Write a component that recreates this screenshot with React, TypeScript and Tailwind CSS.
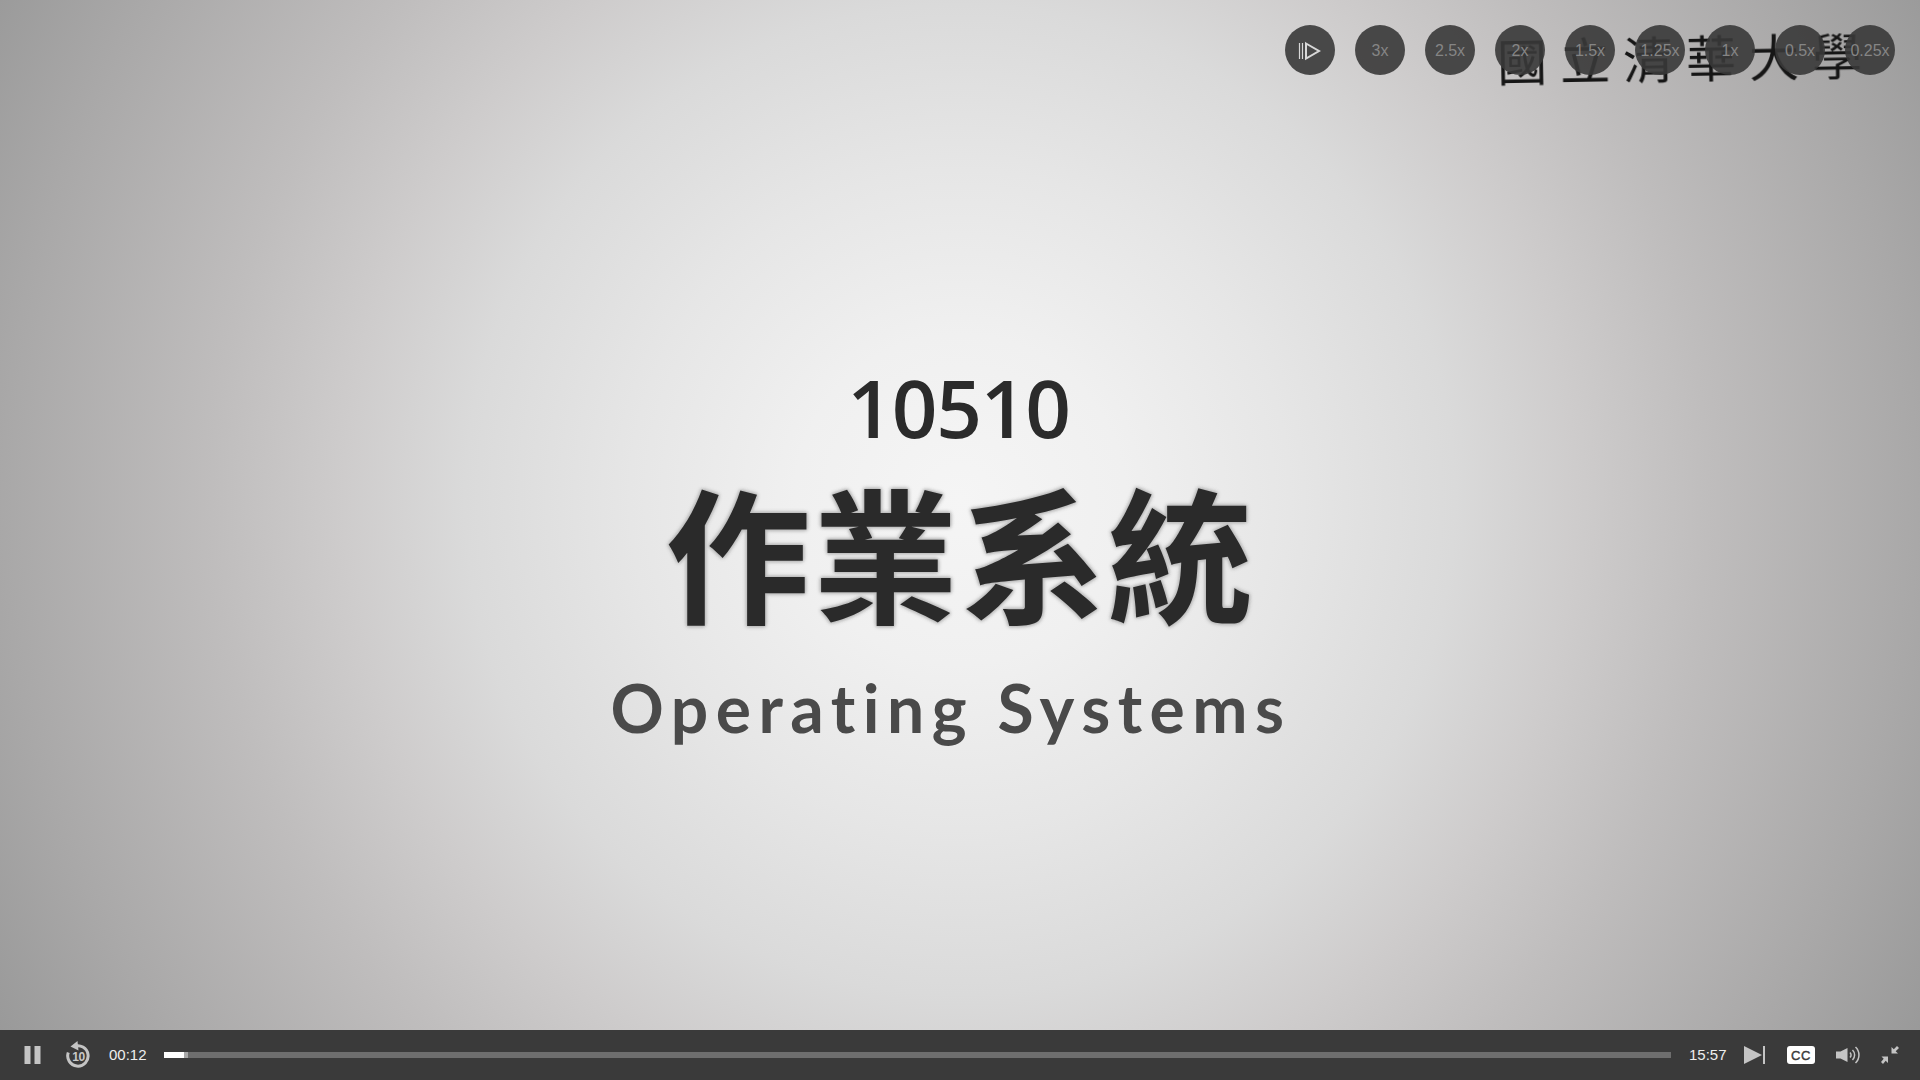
const speeds = ["3x", "2.5x", "2x", "1.5x", "1.25x", "1x", "0.5x", "0.25x"];

function SpeedCircle({ children }: { children: React.ReactNode }) {
  return (
    <div className="flex h-[50px] w-[50px] shrink-0 items-center justify-center rounded-full bg-[#383838]/90 pt-[1px] font-['Liberation_Sans',sans-serif] text-[16px] whitespace-nowrap text-[#858585]">
      {children}
    </div>
  );
}

export default function App() {
  return (
    <div className="flex h-[1080px] w-[1920px] flex-col overflow-hidden font-['Liberation_Sans',sans-serif]">
      <div className="relative flex h-[1030px] flex-col items-center bg-[radial-gradient(circle_1100px_at_50%_48.5%,#f5f5f5_0%,#f0f0f0_15%,#e6e6e6_30%,#dadada_45%,#cecccc_56%,#bfbdbd_68%,#a9a8a8_87%,#999999_100%)]">
        <div className="mt-[357px] ml-[-3px] h-[100px] font-['Open_Sans',sans-serif] text-[80px] leading-[100px] font-semibold tracking-[-1.2px] text-[#2b2b2b]">
          10510
        </div>
        <div className="mt-[8px] ml-[1px] h-[170px] font-['Noto_Sans_CJK_TC',sans-serif] text-[145px] leading-[170px] font-bold tracking-[2.5px] text-[#2a2a2a] [text-shadow:0_0_3px_#bcbcbc,0_0_3px_#bcbcbc,0_0_4px_#bcbcbc,0_0_5px_#bcbcbc]">
          作業系統
        </div>
        <div className="mt-[28px] ml-[-18px] h-[90px] font-['Lato',sans-serif] text-[66px] leading-[90px] font-bold tracking-[7.5px] whitespace-nowrap text-[#4a4a4a]">
          Operating Systems
        </div>

        <div className="absolute top-[24px] left-[1497px] -rotate-1 font-['Noto_Sans_CJK_TC',sans-serif] text-[50px] leading-[64px] font-normal tracking-[13px] whitespace-nowrap text-[#161616] blur-[0.6px]">
          國立清華大學
        </div>

        <div className="absolute top-[25px] right-[25px] flex gap-[20px]">
          <SpeedCircle>
            <svg width="24" height="22" viewBox="0 0 24 22" fill="none" stroke="#d8d8d8">
              <path d="M1.5 3v16M4.5 3v16" strokeWidth="1.2" />
              <path d="M8 3.5 21 11 8 18.5Z" strokeWidth="2" strokeLinejoin="miter" />
            </svg>
          </SpeedCircle>
          {speeds.map((s) => (
            <SpeedCircle key={s}>{s}</SpeedCircle>
          ))}
        </div>
      </div>

      <div className="flex h-[50px] items-center bg-[#3a3a3a] pl-[24px] text-[15px] text-[#eeeeee]">
        <svg width="17" height="18" viewBox="0 0 17 18" className="shrink-0" fill="#c4c4c4">
          <rect x="0.5" y="0" width="6" height="18" />
          <rect x="10.5" y="0" width="6" height="18" />
        </svg>
        <div className="relative ml-[25px] h-[28px] w-[25px] shrink-0">
          <svg width="25" height="28" viewBox="0 0 25 28" fill="none">
            <path d="M8 5.5a10.2 10.2 0 1 1-5.7 6" stroke="#c4c4c4" strokeWidth="3" />
            <path d="M11.5 0 4.5 5.5 12.5 9.5Z" fill="#c4c4c4" />
          </svg>
          <span className="absolute top-[9px] left-0 w-[25px] text-center text-[12px] leading-[14px] font-bold tracking-[-0.5px] text-[#c8c8c8]">
            10
          </span>
        </div>
        <span className="ml-[18px] w-[38px] shrink-0 whitespace-nowrap">00:12</span>
        <div className="ml-[17px] flex h-[6px] w-[1507px] shrink-0 bg-[#6e6e6e]">
          <div className="h-full w-[20px] bg-white" />
          <div className="h-full w-[4px] bg-[#a8a8a8]" />
        </div>
        <span className="ml-[18px] w-[38px] shrink-0 whitespace-nowrap">15:57</span>
        <svg width="21" height="18" viewBox="0 0 21 18" className="ml-[17px] shrink-0" fill="#c4c4c4">
          <path d="M0 0 18 9 0 18Z" />
          <rect x="19" y="0" width="2" height="18" />
        </svg>
        <div className="ml-[22px] flex h-[18px] w-[28px] shrink-0 items-center justify-center rounded-[3px] bg-white text-[13px] leading-none font-medium tracking-[0.5px] text-[#3a3a3a] [-webkit-text-stroke:0.4px_#3a3a3a]">
          CC
        </div>
        <svg width="24" height="20" viewBox="0 0 24 20" className="ml-[21px] shrink-0" fill="none">
          <path d="M0 6.5h4.5l7-3.5v14l-7-3.5H0Z" fill="#c4c4c4" />
          <path d="M14 7.5a3.5 3.5 0 0 1 0 5M16.5 5a7 7 0 0 1 0 10M19.5 2a11 11 0 0 1 0 16" stroke="#c4c4c4" strokeWidth="1.5" />
        </svg>
        <svg width="18" height="18" viewBox="0 0 18 18" className="ml-[21px] shrink-0" fill="#c4c4c4">
          <path d="M10.5 1v6.5H17l-2.3-2.3L18 2l-2-2-3.2 3.3Z" />
          <path d="M0.5 10.5H7V17l-2.3-2.3L2 18l-2-2 2.7-3.2Z" />
        </svg>
      </div>
    </div>
  );
}
